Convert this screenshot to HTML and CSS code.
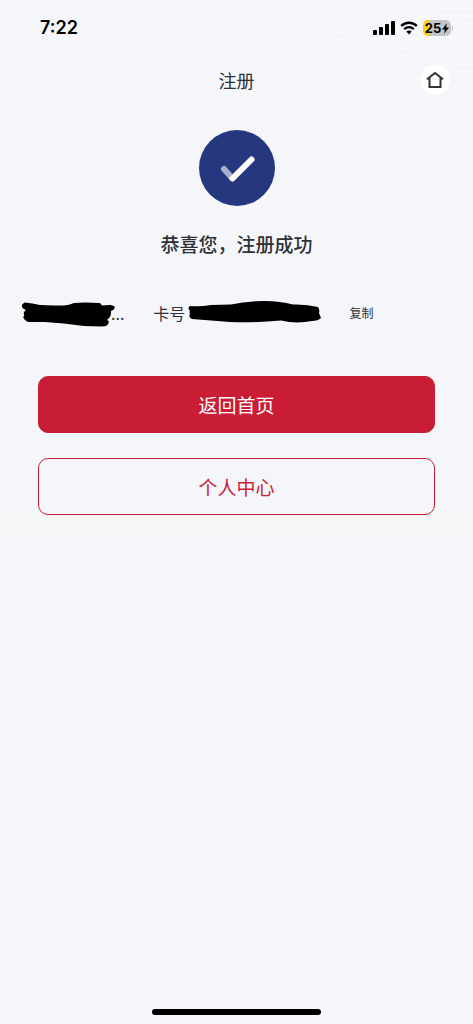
FILE: index.html
```html
<!DOCTYPE html>
<html lang="zh-CN">
<head>
<meta charset="utf-8">
<meta name="viewport" content="width=device-width, initial-scale=1">
<title>注册</title>
<link rel="stylesheet" href="styles.css">
</head>
<body>
<div class="screen">
  <svg class="waves" viewBox="0 0 180 110" fill="none" stroke="#fff" stroke-width="2" aria-hidden="true">
    <path d="M0 36C50 10 110 0 180 2M2 42C55 17 115 7 180 9M4 48C60 24 118 14 180 16M7 54C62 31 120 21 180 23M11 60C66 38 124 28 180 30M16 65C70 45 126 35 180 37M22 70C76 52 130 42 180 44M30 75C82 59 134 49 180 51M40 80C90 66 138 56 180 58M52 85C98 73 142 63 180 65M66 90C108 80 146 71 180 72"/>
  </svg>
  <div class="status">
    <span class="time">7:22</span>
    <div class="indicators">
      <svg class="signal" viewBox="0 0 22 14" aria-hidden="true">
        <rect x="0" y="9" width="4" height="5" rx="1"/><rect x="6" y="6" width="4" height="8" rx="1"/><rect x="12" y="3" width="4" height="11" rx="1"/><rect x="18" y="0" width="4" height="14" rx="1"/>
      </svg>
      <svg class="wifi" viewBox="0 0 18 14" aria-hidden="true">
        <path d="M1.2 5C5.6.7 12.4.7 16.8 5M4.2 8.2C7 5.6 11 5.6 13.8 8.2" fill="none" stroke="#000" stroke-width="2.4"/>
        <path d="M6.3 10.6C7.9 9.2 10.1 9.2 11.7 10.6L9 13.4Z"/>
      </svg>
      <div class="battery">
        <span>25</span>
        <svg class="bolt" viewBox="0 0 8 12" aria-hidden="true"><path d="M5.5 0L0 7H3.3L2.4 12L8 4.8H4.7Z"/></svg>
      </div>
      <i class="battery-cap"></i>
    </div>
  </div>
  <header class="nav">
    <h1>注册</h1>
    <button class="home" type="button" aria-label="首页">
      <svg viewBox="0 0 18 18" fill="none" stroke="#333" stroke-width="2" aria-hidden="true"><path d="M1 8.2L9 2L17 8.2M3.500 6.700V16H14.500V6.700"/></svg>
    </button>
  </header>
  <main class="content">
    <svg class="success" viewBox="0 0 76 76" fill="none" stroke-linecap="round" stroke-width="6" aria-hidden="true">
      <circle cx="38" cy="38" r="38" fill="#24377f"/>
      <path d="M25 39L33 48" stroke="#a7afcc"/>
      <path d="M33.500 48.500L52.500 29.500" stroke="#fff"/>
    </svg>
    <h2>恭喜您，注册成功</h2>
    <div class="account">
      <div class="name">
        <svg class="name-mask" viewBox="0 0 91 28" aria-hidden="true"><path d="M5 2.500Q12 3 20 5Q34 5.500 44 5.500Q49 5 54 3Q64 2 80 3L82 5.500L90 5Q94 5 95 7.500Q94 10 91 11Q92 16 87 20Q90 21 88 24Q87 26.500 82 26.500L64 26Q43 23 25 22L8 22Q4 20 3 17Q5 16 4 15Q3 12 6 10Q1 8 2 5Q3 3 5 2.500Z"/></svg>
        <span>...</span>
      </div>
      <div class="card">
        <span>卡号</span>
        <svg class="card-mask" viewBox="0 0 134 28" aria-hidden="true"><path d="M3 6Q13 7 24 5L44 4.500Q59 1 78 1Q93 1 106 4.500Q119 4 131 7Q133 10 132 13L134 18Q131 21 125 21Q109 24 94 20.500Q68 23 43 22L5 19Q1 17 3 14Q2 12 3 11Q0 8 3 6Z"/></svg>
      </div>
      <button class="copy" type="button">复制</button>
    </div>
    <div class="actions">
      <button class="action primary" type="button">返回首页</button>
      <button class="action outline" type="button">个人中心</button>
    </div>
    <div class="band"></div>
  </main>
  <div class="home-indicator"></div>
</div>
</body>
</html>
```
FILE: styles.css
```css
* { box-sizing: border-box; }
body {
  margin: 0;
  background: #f4f6fa;
  color: #303136;
  font-family: "Noto Sans CJK SC", sans-serif;
}
button {
  margin: 0;
  padding: 0;
  border: 0;
  background: none;
  color: inherit;
  font-family: inherit;
  cursor: pointer;
}
svg { display: block; flex: none; }
h1, h2 { margin: 0; }
.screen {
  position: relative;
  display: flex;
  flex-direction: column;
  min-height: 100vh;
}
.waves {
  position: absolute;
  top: 0;
  right: 0;
  width: 180px;
  height: 110px;
  opacity: 0.4;
}
.status {
  position: relative;
  display: flex;
  align-items: center;
  justify-content: space-between;
  height: 56px;
  padding: 0 20px 0 40px;
  color: #000;
}
.time {
  font: 600 18px/24px Inter, sans-serif;
}
.indicators { display: flex; align-items: center; }
.signal { width: 22px; height: 14px; margin-right: 5px; }
.wifi { width: 18px; height: 14px; margin-right: 5px; }
.battery {
  display: flex;
  align-items: center;
  justify-content: center;
  gap: 1px;
  width: 28px;
  height: 16px;
  border-radius: 5px;
  background: linear-gradient(to right, #fccf16 7px, #c5c6c9 7px);
  font: 700 13px/16px Inter, sans-serif;
}
.bolt { width: 7px; height: 11px; }
.battery-cap {
  width: 1px;
  height: 5px;
  margin-left: 1px;
  background: #c5c6c9;
}
.nav {
  position: relative;
  display: grid;
  grid-template-columns: 1fr auto 1fr;
  align-items: center;
  height: 48px;
  padding: 0 23px;
}
.nav h1 {
  grid-column: 2;
  font-size: 18px;
  font-weight: 400;
  line-height: 24px;
}
.home {
  display: grid;
  place-items: center;
  justify-self: end;
  width: 30px;
  height: 30px;
  border-radius: 50%;
  background: #fff;
}
.home svg { width: 18px; height: 18px; }
.content {
  display: flex;
  flex-direction: column;
  padding-top: 26px;
}
.success { align-self: center; width: 76px; height: 76px; }
.content h2 {
  margin-top: 24px;
  font-size: 19px;
  font-weight: 500;
  line-height: 28px;
  text-align: center;
}
.account {
  display: flex;
  align-items: flex-start;
  height: 28px;
  margin-top: 42px;
  padding: 0 20px;
  font-size: 16px;
  line-height: 26px;
}
.name, .card { display: flex; align-items: flex-start; }
.name-mask { width: 91px; height: 28px; overflow: visible; }
.card { gap: 2px; margin-left: 29px; }
.card-mask { width: 134px; height: 28px; }
.copy { margin-left: 28px; font-size: 12px; line-height: 26px; }
.actions {
  display: grid;
  gap: 25px;
  margin-top: 48px;
  padding: 0 38px;
}
.action {
  height: 57px;
  border: 1px solid #c91d35;
  border-radius: 10px;
  font-size: 19px;
  line-height: 28px;
}
.primary { background: #c91d35; color: #fff; }
.outline { color: #c91d35; }
.band { height: 17px; background: #f6f6f7; }
.home-indicator {
  align-self: center;
  width: 169px;
  height: 6px;
  margin-top: auto;
  margin-bottom: 9px;
  border-radius: 3px;
  background: #000;
}
```
